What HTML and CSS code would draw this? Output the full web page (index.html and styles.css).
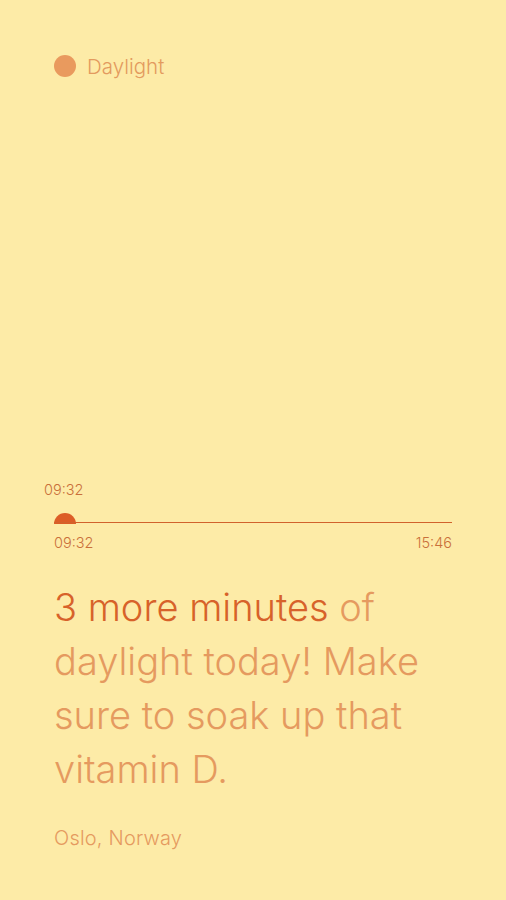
FILE: index.html
```html
<!DOCTYPE html>
<html lang="en">
<head>
<meta charset="utf-8">
<title>Daylight</title>
<link rel="stylesheet" href="styles.css">
</head>
<body>
<main class="screen">
  <header class="brand">
    <span class="brand-dot"></span>
    <span class="brand-name">Daylight</span>
  </header>
  <div class="spacer"></div>
  <section class="timeline">
    <div class="now-label">09:32</div>
    <div class="track">
      <span class="sun"></span>
      <span class="line"></span>
    </div>
    <div class="range">
      <span>09:32</span>
      <span>15:46</span>
    </div>
  </section>
  <p class="message"><span class="accent">3 more minutes</span> <span class="rest">of daylight today! Make sure to soak up that vitamin D.</span></p>
  <p class="location">Oslo, Norway</p>
</main>
</body>
</html>
```
FILE: styles.css
```css
* { box-sizing: border-box; }
html, body { margin: 0; padding: 0; }
body {
  background: #fdeba7;
  font-family: Inter, "Noto Sans", sans-serif;
  color: #e59a5f;
}
.screen {
  height: 900px;
  display: flex;
  flex-direction: column;
  padding: 54px 54px 50px 54px;
}
.brand {
  display: flex;
  align-items: center;
  gap: 11px;
  height: 24px;
}
.brand-dot {
  width: 22px;
  height: 22px;
  border-radius: 50%;
  background: #e99a5e;
}
.brand-name {
  font-size: 20.5px;
  font-weight: 300;
  color: #e39a5e;
}
.spacer { flex: 1; }
.timeline { display: flex; flex-direction: column; }
.now-label {
  margin-left: -10px;
  font-size: 14.5px;
  font-weight: 300;
  color: #c9703a;
  line-height: 18px;
}
.track {
  margin-top: 12px;
  display: flex;
  align-items: flex-end;
  height: 12px;
}
.sun {
  width: 22px;
  height: 11px;
  border-radius: 11px 11px 0 0;
  background: #dc5d27;
  flex: none;
  margin-bottom: -1px;
}
.line {
  flex: 1;
  height: 1.5px;
  background: #d1622c;
  margin-left: -22px;
}
.range {
  margin-top: 11px;
  display: flex;
  justify-content: space-between;
  font-size: 14.5px;
  font-weight: 300;
  color: #c9703a;
  line-height: 18px;
}
.message {
  margin: 28px 0 0 0;
  font-size: 38px;
  font-weight: 300;
  line-height: 54px;
  letter-spacing: 0;
  color: #e59a5f;
}
.accent { color: #d7622a; }
.rest { color: #e59a5f; }
.location {
  margin: 30px 0 0 0;
  font-size: 20px;
  font-weight: 300;
  line-height: 24px;
  letter-spacing: 0.2px;
  color: #e59a5f;
}
```
